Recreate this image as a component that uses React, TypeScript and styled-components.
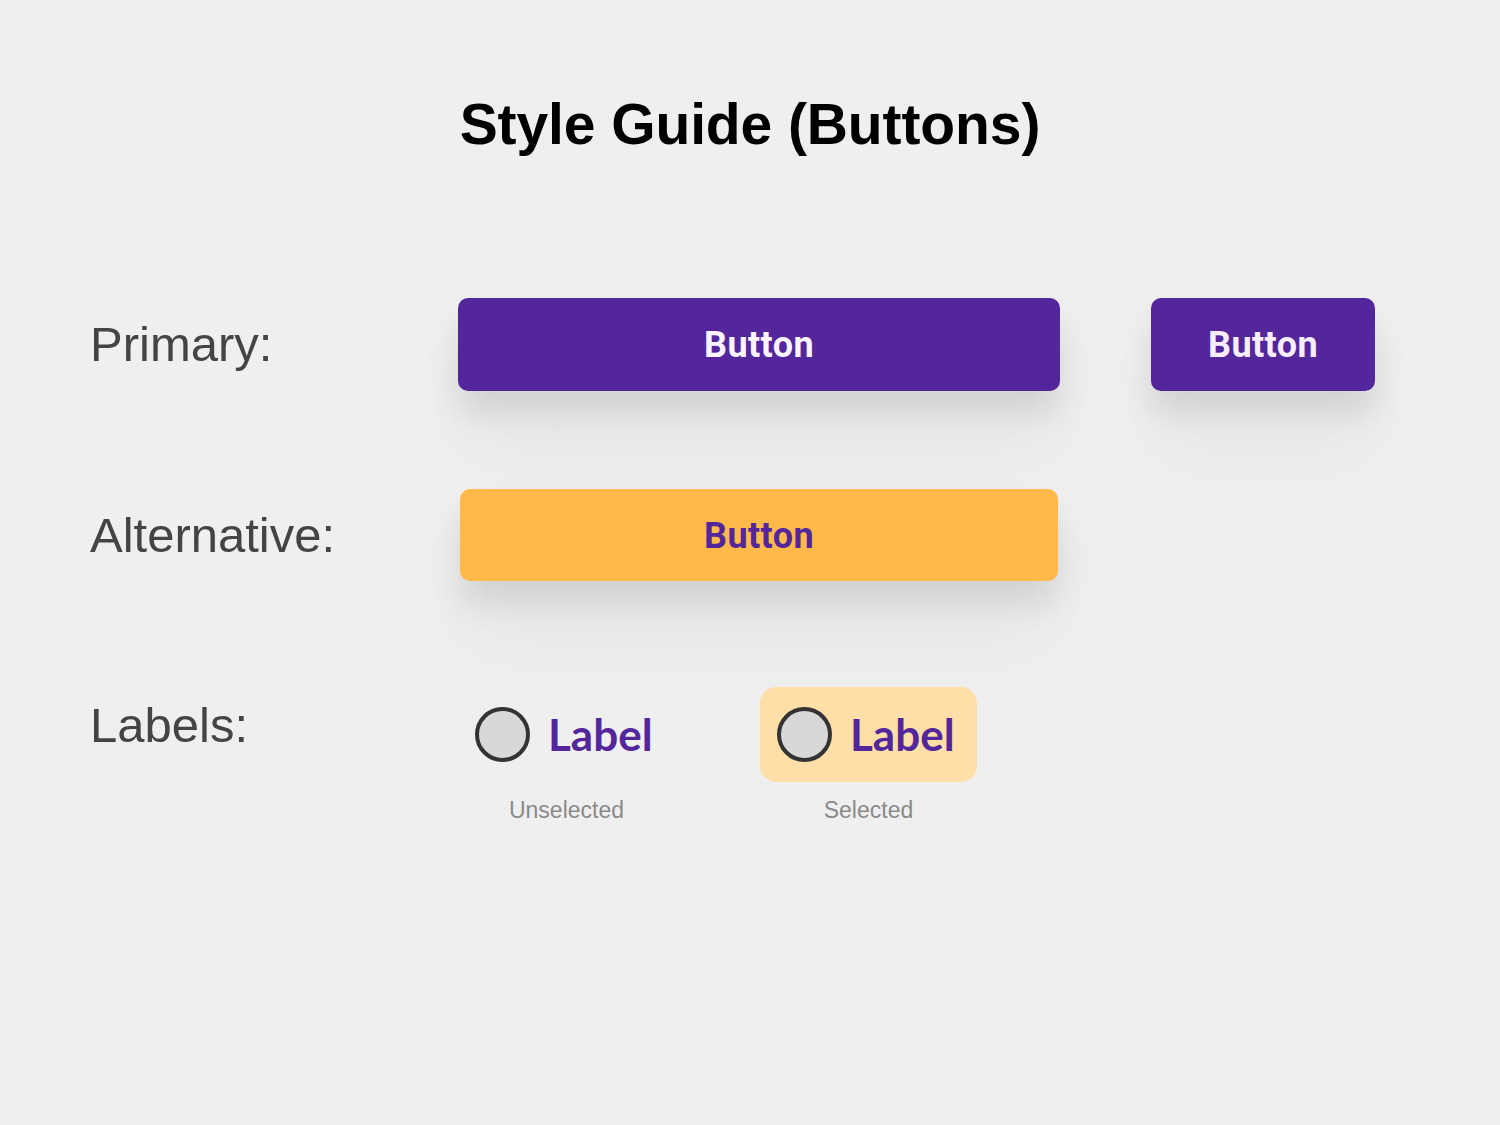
import styled, { createGlobalStyle } from "styled-components";

const GlobalStyle = createGlobalStyle`
    html, body {
        margin: 0;
        padding: 0;
        background: #efefef;
    }
    body {
        font-family: "Liberation Sans", Arial, sans-serif;
    }
`;

const PURPLE = "#54269c";
const AMBER = "#ffb94b";

const labels = [
    { id: 1, text: "Label", caption: "Unselected", selected: false },
    { id: 2, text: "Label", caption: "Selected", selected: true },
];

export default function App() {
    return (
        <Page>
            <GlobalStyle />
            <Title>Style Guide (Buttons)</Title>
            <Grid>
                <RowLabel>Primary:</RowLabel>
                <ButtonRow>
                    <Button $variant="primary" $width={602}>Button</Button>
                    <Button $variant="primary" $width={224} $light>Button</Button>
                </ButtonRow>

                <RowLabel>Alternative:</RowLabel>
                <ButtonRow>
                    <Button $variant="alt" $width={598} $height={92} $offset={2}>Button</Button>
                </ButtonRow>

                <RowLabel $top={-8} $extra={7}>Labels:</RowLabel>
                <ChipRow>
                    {labels.map((item) => (
                        <ChipColumn key={item.id}>
                            <Chip $selected={item.selected}>
                                <Radio />
                                <ChipText>{item.text}</ChipText>
                            </Chip>
                            <Caption>{item.caption}</Caption>
                        </ChipColumn>
                    ))}
                </ChipRow>
            </Grid>
        </Page>
    );
}

const Page = styled.div`
    width: 1500px;
    min-height: 1125px;
    display: flex;
    flex-direction: column;
    align-items: center;
`;

const Title = styled.h1`
    margin: 92px 0 0 0;
    font-family: "Liberation Sans", Arial, sans-serif;
    font-weight: 700;
    font-size: 57px;
    letter-spacing: -0.1px;
    line-height: 1.15;
    color: #000;
`;

const Grid = styled.div`
    align-self: stretch;
    margin-top: 140px;
    padding-left: 90px;
    display: grid;
    grid-template-columns: 368px 1fr;
    row-gap: 98px;
`;

const RowLabel = styled.div<{ $top?: number; $extra?: number }>`
    font-family: "Liberation Sans", Arial, sans-serif;
    font-size: 49px;
    line-height: 93px;
    height: 93px;
    color: #444;
    margin-top: ${({ $top = 0, $extra = 0 }) => $top + $extra}px;
`;

const ButtonRow = styled.div`
    display: flex;
    align-items: flex-start;
    gap: 91px;
`;

const Button = styled.button<{ $variant: "primary" | "alt"; $width: number; $height?: number; $offset?: number; $light?: boolean }>`
    width: ${({ $width }) => $width}px;
    height: ${({ $height = 93 }) => $height}px;
    margin-left: ${({ $offset = 0 }) => $offset}px;
    border: none;
    border-radius: 10px;
    background: ${({ $variant }) => ($variant === "primary" ? PURPLE : AMBER)};
    color: ${({ $variant, $light }) => ($variant === "alt" ? PURPLE : $light ? "#f7edfc" : "#fbf3ff")};
    font-family: Roboto, "Open Sans", sans-serif;
    font-weight: 700;
    font-size: 36px;
    letter-spacing: 0.4px;
    padding: 2px 0 0 0;
    cursor: pointer;
    box-shadow: 0 22px 32px rgba(0, 0, 0, 0.1), 0 60px 80px rgba(0, 0, 0, 0.035);
`;

const ChipRow = styled.div`
    display: flex;
    gap: 85px;
    margin-top: 7px;
`;

const ChipColumn = styled.div`
    display: flex;
    flex-direction: column;
    align-items: center;
    gap: 15px;
`;

const Chip = styled.div<{ $selected: boolean }>`
    width: 217px;
    height: 95px;
    box-sizing: border-box;
    padding-left: 17px;
    display: flex;
    align-items: center;
    gap: 18px;
    border-radius: 16px;
    background: ${({ $selected }) => ($selected ? "#ffdfa8" : "#efefef")};
    box-shadow: ${({ $selected }) => ($selected ? "none" : "0 0 1.5px rgba(0, 0, 0, 0.08)")};
`;

const Radio = styled.span`
    width: 55px;
    height: 55px;
    box-sizing: border-box;
    border-radius: 50%;
    border: 4.5px solid #333;
    background: #d8d8d8;
    flex-shrink: 0;
`;

const ChipText = styled.span`
    font-family: Lato, "Open Sans", sans-serif;
    font-weight: 700;
    font-size: 44px;
    color: ${PURPLE};
`;

const Caption = styled.div`
    font-family: "Liberation Sans", Arial, sans-serif;
    font-size: 23px;
    line-height: 1.2;
    color: #8a8a8a;
`;
